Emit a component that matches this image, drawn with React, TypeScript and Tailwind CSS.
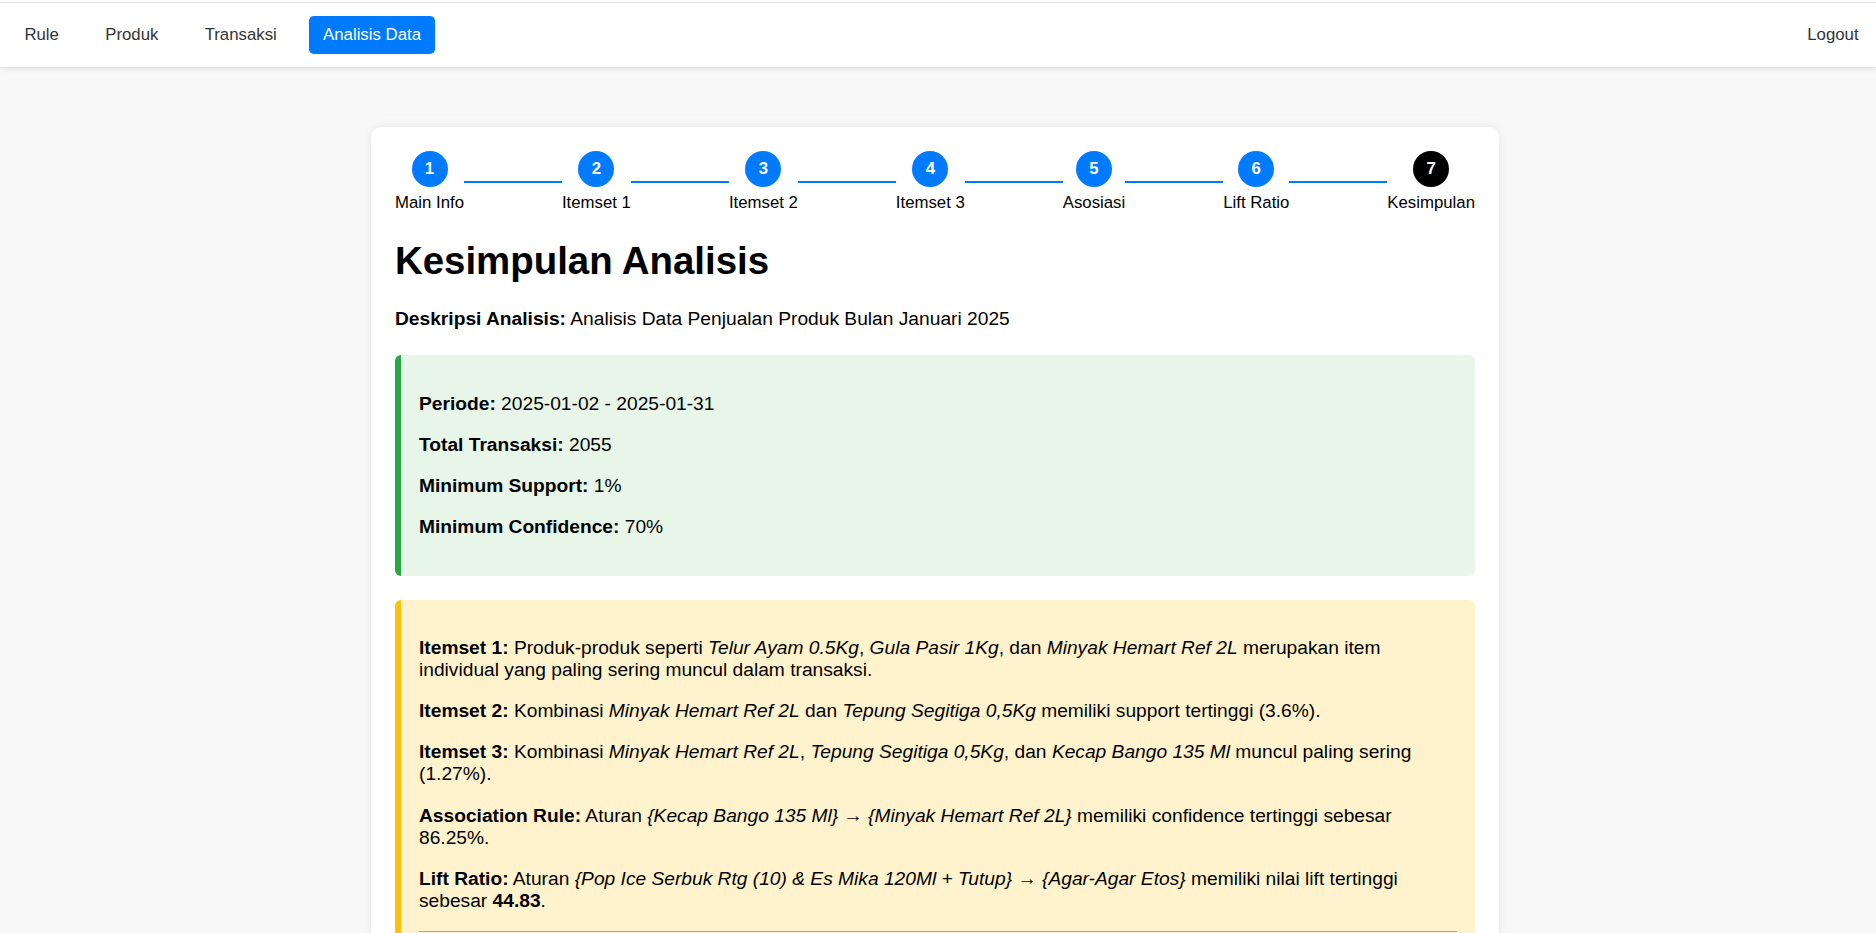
import React from "react";

const steps = ["Main Info", "Itemset 1", "Itemset 2", "Itemset 3", "Asosiasi", "Lift Ratio", "Kesimpulan"];

function NavLink({ children, active }: { children: React.ReactNode; active?: boolean }) {
  return (
    <a
      href="#"
      className={
        "block px-[14.4px] py-[9.6px] rounded-[4.8px] text-[16.8px] leading-[1.15] " +
        (active ? "bg-[#007bff] text-white" : "text-[#333333]")
      }
    >
      {children}
    </a>
  );
}

function Stepper() {
  return (
    <div className="flex items-center">
      {steps.map((s, i) => (
        <React.Fragment key={s}>
          <div className="flex flex-col items-center">
            <div
              className={
                "w-[36px] h-[36px] rounded-full flex items-center justify-center text-white font-bold text-[16.8px] leading-none " +
                (i === steps.length - 1 ? "bg-black" : "bg-[#007bff]")
              }
            >
              {i + 1}
            </div>
            <div className="mt-[6px] text-[16.8px] leading-[1.15] whitespace-nowrap">{s}</div>
          </div>
          {i < steps.length - 1 && <div className="flex-1 h-[2px] bg-[#007bff]" />}
        </React.Fragment>
      ))}
    </div>
  );
}

export default function App() {
  const p = "my-[19.2px] text-[19.2px] leading-[1.15]";
  return (
    <div className="min-h-screen bg-[#f8f8f8] font-['Liberation_Sans',Arial,sans-serif] text-black">
      <div className="bg-white pt-[2px] shadow-[0_2px_5px_rgba(0,0,0,0.1)] relative">
        <nav className="h-[65px] border-t border-[#e4e4e4] flex items-center justify-between pl-[10px] pr-[3px]">
          <div className="flex items-center gap-[17.5px]">
            <NavLink>Rule</NavLink>
            <NavLink>Produk</NavLink>
            <NavLink>Transaksi</NavLink>
            <NavLink active>Analisis Data</NavLink>
          </div>
          <NavLink>Logout</NavLink>
        </nav>
      </div>

      <div className="flex justify-center pt-[60px] pr-[6px] pb-[40px]">
        <div className="w-[1128px] bg-white rounded-[10px] shadow-[0_0_10px_rgba(0,0,0,0.08)] p-[24px]">
          <Stepper />

          <h1 className="mt-[27px] text-[38.4px] leading-[1.15] font-bold">Kesimpulan Analisis</h1>

          <p className="mt-[25px] text-[19.2px] leading-[1.15]">
            <strong>Deskripsi Analisis:</strong> Analisis Data Penjualan Produk Bulan Januari 2025
          </p>

          <div className="mt-[24.8px] rounded-[6px] border-l-[6px] border-[#28a745] bg-[#e8f5e9] px-[18px] py-[18px]">
            <p className={p}>
              <strong>Periode:</strong> 2025-01-02 - 2025-01-31
            </p>
            <p className={p}>
              <strong>Total Transaksi:</strong> 2055
            </p>
            <p className={p}>
              <strong>Minimum Support:</strong> 1%
            </p>
            <p className={p}>
              <strong>Minimum Confidence:</strong> 70%
            </p>
          </div>

          <div className="mt-[24px] rounded-[6px] border-l-[6px] border-[#ffc107] bg-[#fff3cd] px-[18px] py-[18px]">
            <p className={p}>
              <strong>Itemset 1:</strong> Produk-produk seperti <em>Telur Ayam 0.5Kg</em>, <em>Gula Pasir 1Kg</em>, dan{" "}
              <em>Minyak Hemart Ref 2L</em> merupakan item
              <br />
              individual yang paling sering muncul dalam transaksi.
            </p>
            <p className={p}>
              <strong>Itemset 2:</strong> Kombinasi <em>Minyak Hemart Ref 2L</em> dan <em>Tepung Segitiga 0,5Kg</em> memiliki
              support tertinggi (3.6%).
            </p>
            <p className={p}>
              <strong>Itemset 3:</strong> Kombinasi <em>Minyak Hemart Ref 2L</em>, <em>Tepung Segitiga 0,5Kg</em>, dan{" "}
              <em>Kecap Bango 135 Ml</em> muncul paling sering (1.27%).
            </p>
            <p className={p}>
              <strong>Association Rule:</strong> Aturan <em>{"{Kecap Bango 135 Ml}"}</em> → <em>{"{Minyak Hemart Ref 2L}"}</em>{" "}
              memiliki confidence tertinggi sebesar 86.25%.
            </p>
            <p className={p}>
              <strong>Lift Ratio:</strong> Aturan <em>{"{Pop Ice Serbuk Rtg (10) & Es Mika 120Ml + Tutup}"}</em> →{" "}
              <em>{"{Agar-Agar Etos}"}</em> memiliki nilai lift tertinggi sebesar <strong>44.83</strong>.
            </p>
            <hr className="border-0 border-t border-[#a6a6a6] my-[9.6px]" />
            <p className={p}>
              <strong>Kesimpulan:</strong> Produk kebutuhan pokok seperti minyak goreng, tepung, dan kecap sering dibeli
              bersamaan sehingga dapat dijadikan dasar strategi penataan produk dan promosi paket.
            </p>
          </div>
        </div>
      </div>
    </div>
  );
}
